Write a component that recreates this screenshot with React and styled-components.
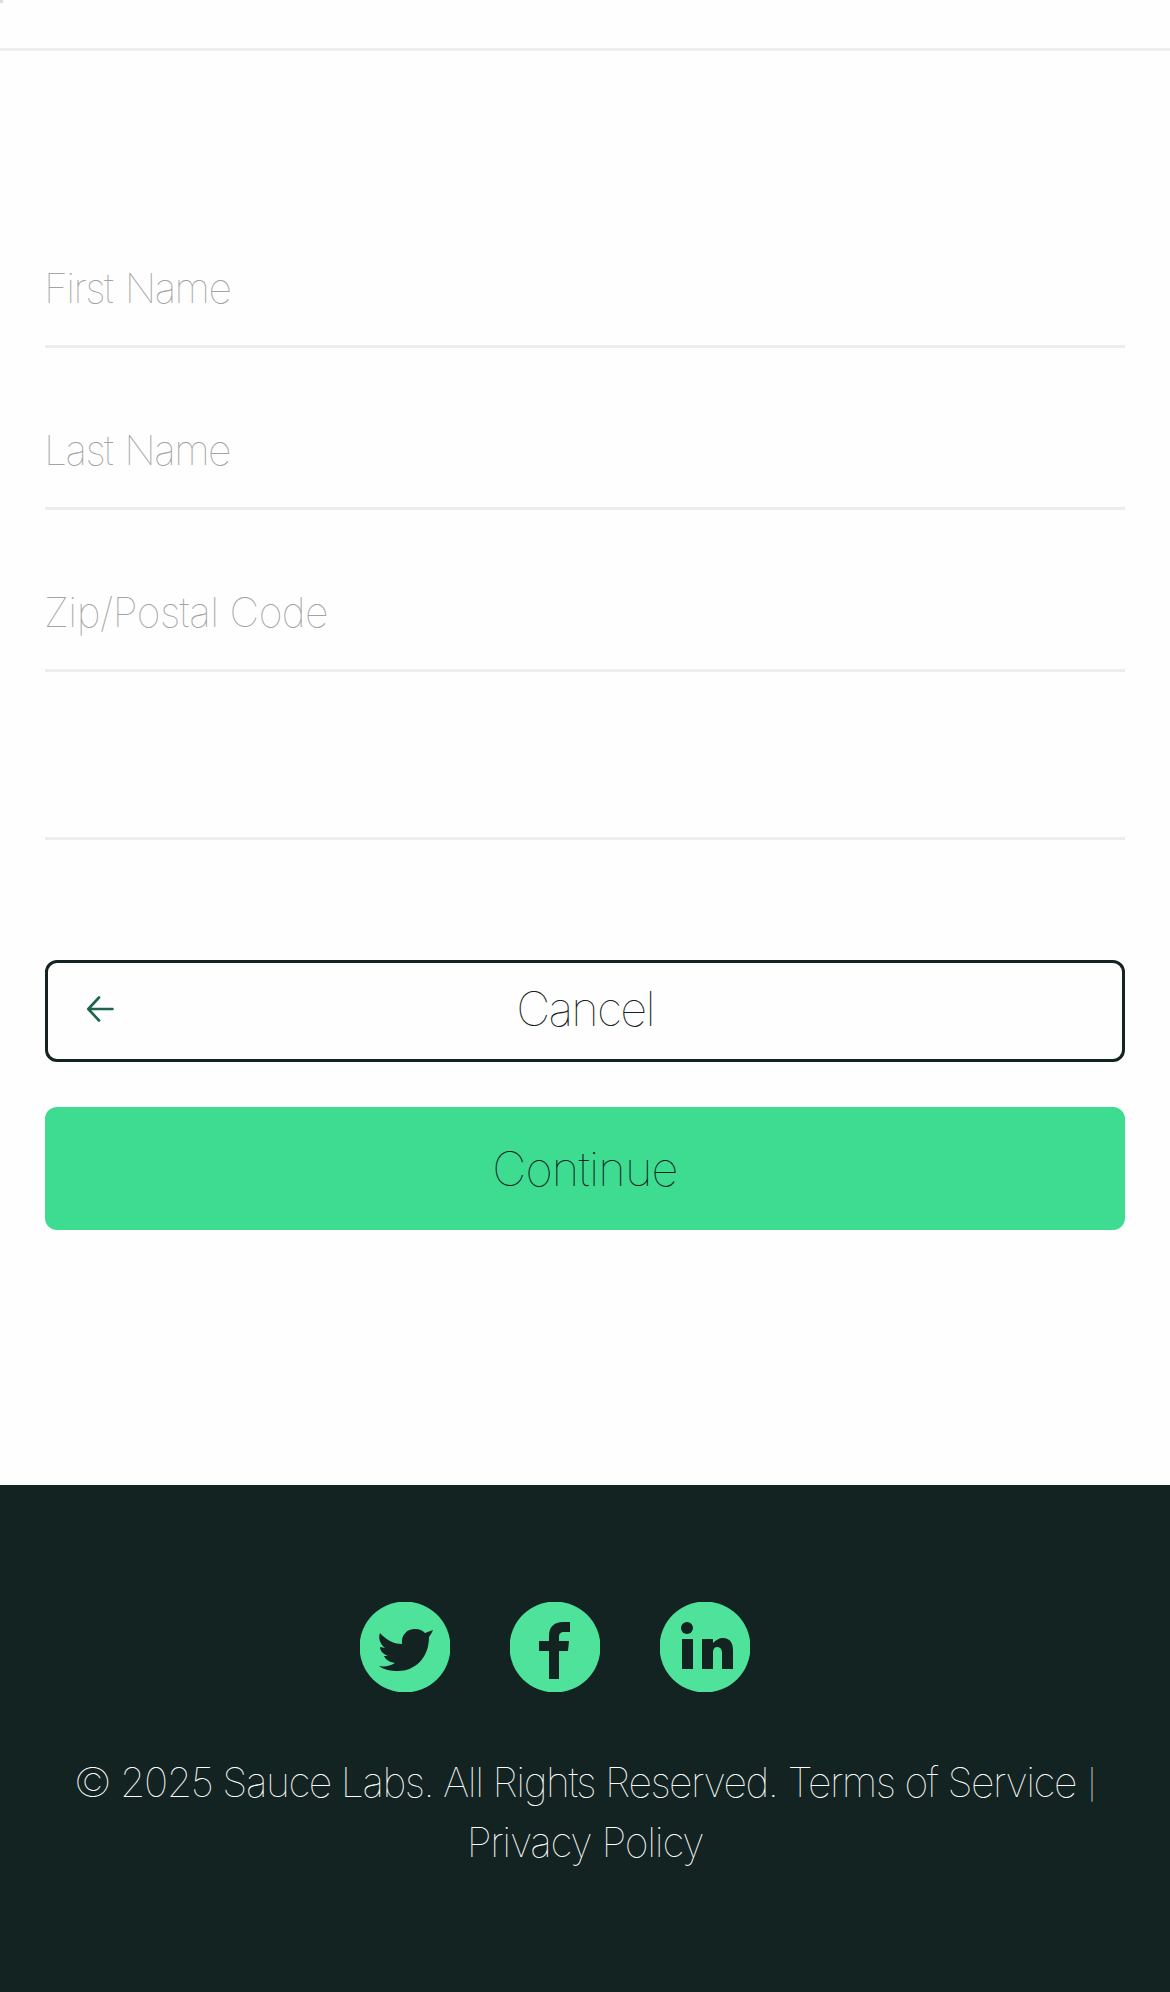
import React from "react";
import styled, { createGlobalStyle } from "styled-components";

const GlobalStyle = createGlobalStyle`
  *, *::before, *::after { box-sizing: border-box; }
  body {
    margin: 0;
    background: #fff;
    font-family: "Inter", "Liberation Sans", sans-serif;
    font-weight: 100;
  }
`;

const Page = styled.div`
  display: flex;
  flex-direction: column;
  min-height: 1992px;
  background: #fefefe;
`;

const Header = styled.header`
  height: 51px;
  border-bottom: 3px solid #ededed;
`;

const HeaderMark = styled.div`
  width: 3px;
  height: 3px;
  background: #dcdcdc;
`;

const Form = styled.form`
  height: 1434px;
  padding: 180px 45px 0;
`;

const Fields = styled.div`
  display: flex;
  flex-direction: column;
  gap: 45px;
`;

const Input = styled.input`
  display: block;
  width: 100%;
  height: 117px;
  padding: 0 0 1px;
  border: 0;
  border-bottom: 3px solid #ededed;
  border-radius: 0;
  outline: 0;
  background: transparent;
  font: 100 41px "Inter", "Liberation Sans", sans-serif;
  letter-spacing: ${(p) => p.$spacing};
  word-spacing: ${(p) => p.$wordSpacing || "normal"};
  text-indent: -1px;
  color: #132322;

  &::placeholder { color: #a3a3a3; opacity: 1; }
`;

const Actions = styled.div`
  display: flex;
  flex-direction: column;
  gap: 45px;
  margin-top: 165px;
  padding-top: 120px;
  border-top: 3px solid #ededed;
`;

const Button = styled.button`
  display: grid;
  grid-template-columns: 90px 1fr 90px;
  align-items: center;
  height: ${(p) => (p.$primary ? "123px" : "102px")};
  padding: 0 0 ${(p) => (p.$primary ? "0" : "4px")};
  border: 3px solid ${(p) => (p.$primary ? "#3ddc91" : "#132322")};
  border-radius: 12px;
  background: ${(p) => (p.$primary ? "#3ddc91" : "transparent")};
  color: #132322;
  font: 100 47px/60px "Inter", "Liberation Sans", sans-serif;
`;

const Label = styled.span`
  grid-column: 2;
  text-align: center;
  letter-spacing: ${(p) => p.$spacing};
`;

const BackArrow = styled.svg`
  grid-column: 1;
  width: 30px;
  height: 28px;
  margin-left: 38px;
`;

const Footer = styled.footer`
  flex: 1;
  padding-top: 117px;
  background: #132322;
  color: #fff;
`;

const Socials = styled.ul`
  display: flex;
  gap: 60px;
  margin: 0 0 60px;
  padding: 0 0 0 360px;
  list-style: none;
`;

const SocialIcon = styled.svg`
  display: block;
  width: 90px;
  height: 90px;
`;

const Copy = styled.div`
  text-align: center;
  font-size: 41px;
  line-height: 60px;
`;

const CopyLine = styled.div`
  white-space: nowrap;
  letter-spacing: ${(p) => p.$spacing};
`;

const Divider = styled.span`
  margin-left: 2px;
  font-size: 29px;
  line-height: 0;
  letter-spacing: 0;
  vertical-align: 2px;
`;

function Social({ name, children }) {
  return (
    <li>
      <SocialIcon viewBox="0 0 90 90" role="img" aria-label={name}>
        <circle cx="45" cy="45" r="45.5" fill="#4fe29b" />
        <g fill="#132322">{children}</g>
      </SocialIcon>
    </li>
  );
}

export default function App() {
  return (
    <Page>
      <GlobalStyle />
      <Header><HeaderMark /></Header>
      <Form>
        <Fields>
          <Input placeholder="First Name" $spacing="-1.6px" $wordSpacing="2.5px" />
          <Input placeholder="Last Name" $spacing="-1.6px" $wordSpacing="2px" />
          <Input placeholder="Zip/Postal Code" $spacing="-0.55px" />
        </Fields>
        <Actions>
          <Button type="button">
            <BackArrow viewBox="0 0 30 28" fill="none" stroke="#1c6548" strokeWidth="2.6" strokeLinecap="round" strokeLinejoin="round">
              <path d="M26.5 14H3M13 2.5 2.3 14 13 25.5" />
            </BackArrow>
            <Label $spacing="-1.8px">Cancel</Label>
          </Button>
          <Button type="button" $primary>
            <Label $spacing="-0.8px">Continue</Label>
          </Button>
        </Actions>
      </Form>
      <Footer>
        <Socials>
          <Social name="Twitter">
            <path d="M20 31C27 39 35 42 42 42C41 33 47 27 55 27C60 27 63 29 65 31L73 28C72 31 70 33 69 35C69 56 55 69 38 69C31 69 24 68 19 64C25 65 30 64 35 61C29 60 25 57 24 54H28C23 52 20 49 20 45L25 46C20 42 18 36 20 31Z" />
          </Social>
          <Social name="Facebook">
            <path d="M39 77V49H29V39H39V34C39 25 44 20 53 20H60V30H55C50 30 49 32 49 35V39H59L58 49H49V77Z" />
          </Social>
          <Social name="LinkedIn">
            <circle cx="27" cy="26" r="6" />
            <path d="M22 37H33V67H22ZM42 37H53V41C56 38 59 36 63 36C70 36 73 41 73 48V67H62V51C62 47 60 45 57 45C54 45 53 48 53 51V67H42Z" />
          </Social>
        </Socials>
        <Copy>
          <CopyLine $spacing="-1.5px">
            © 2025 Sauce Labs. All Rights Reserved. Terms of Service <Divider>|</Divider>
          </CopyLine>
          <CopyLine $spacing="-1.3px">Privacy Policy</CopyLine>
        </Copy>
      </Footer>
    </Page>
  );
}
